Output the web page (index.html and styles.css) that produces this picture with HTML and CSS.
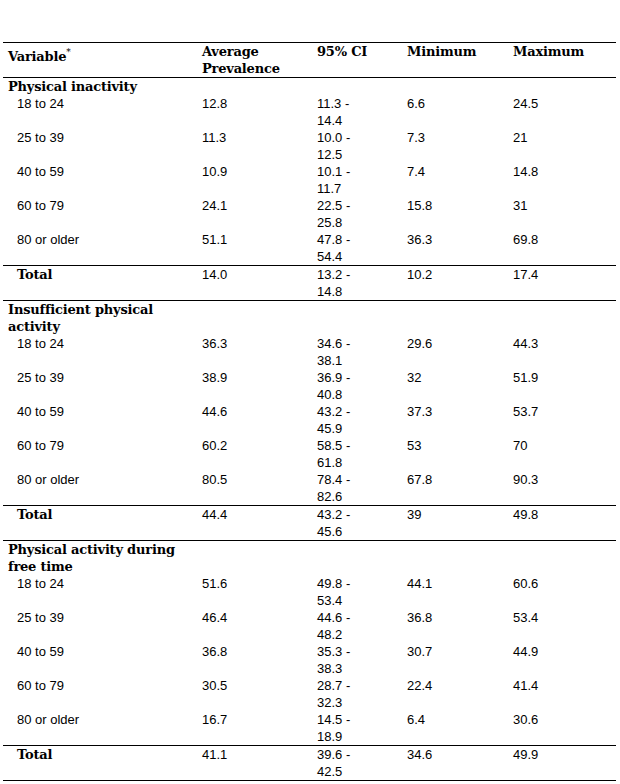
FILE: index.html
```html
<!DOCTYPE html>
<html>
<head>
<meta charset="utf-8">
<link rel="stylesheet" href="styles.css">
</head>
<body>
<table class="data">
  <colgroup>
    <col class="c1"><col class="c2"><col class="c3"><col class="c4"><col class="c5">
  </colgroup>
  <thead>
    <tr class="head">
      <th class="var">Variable<sup class="star">*</sup></th>
      <th>Average<br>Prevalence</th>
      <th>95% CI</th>
      <th>Minimum</th>
      <th>Maximum</th>
    </tr>
  </thead>
  <tbody>
    <tr class="group"><td colspan="5">Physical inactivity</td></tr>
    <tr><td class="sub">18 to 24</td><td>12.8</td><td>11.3 -<br>14.4</td><td>6.6</td><td>24.5</td></tr>
    <tr><td class="sub">25 to 39</td><td>11.3</td><td>10.0 -<br>12.5</td><td>7.3</td><td>21</td></tr>
    <tr><td class="sub">40 to 59</td><td>10.9</td><td>10.1 -<br>11.7</td><td>7.4</td><td>14.8</td></tr>
    <tr><td class="sub">60 to 79</td><td>24.1</td><td>22.5 -<br>25.8</td><td>15.8</td><td>31</td></tr>
    <tr><td class="sub">80 or older</td><td>51.1</td><td>47.8 -<br>54.4</td><td>36.3</td><td>69.8</td></tr>
    <tr class="total"><td class="sub">Total</td><td>14.0</td><td>13.2 -<br>14.8</td><td>10.2</td><td>17.4</td></tr>

    <tr class="group"><td colspan="5">Insufficient physical<br>activity</td></tr>
    <tr><td class="sub">18 to 24</td><td>36.3</td><td>34.6 -<br>38.1</td><td>29.6</td><td>44.3</td></tr>
    <tr><td class="sub">25 to 39</td><td>38.9</td><td>36.9 -<br>40.8</td><td>32</td><td>51.9</td></tr>
    <tr><td class="sub">40 to 59</td><td>44.6</td><td>43.2 -<br>45.9</td><td>37.3</td><td>53.7</td></tr>
    <tr><td class="sub">60 to 79</td><td>60.2</td><td>58.5 -<br>61.8</td><td>53</td><td>70</td></tr>
    <tr><td class="sub">80 or older</td><td>80.5</td><td>78.4 -<br>82.6</td><td>67.8</td><td>90.3</td></tr>
    <tr class="total"><td class="sub">Total</td><td>44.4</td><td>43.2 -<br>45.6</td><td>39</td><td>49.8</td></tr>

    <tr class="group"><td colspan="5">Physical activity during<br>free time</td></tr>
    <tr><td class="sub">18 to 24</td><td>51.6</td><td>49.8 -<br>53.4</td><td>44.1</td><td>60.6</td></tr>
    <tr><td class="sub">25 to 39</td><td>46.4</td><td>44.6 -<br>48.2</td><td>36.8</td><td>53.4</td></tr>
    <tr><td class="sub">40 to 59</td><td>36.8</td><td>35.3 -<br>38.3</td><td>30.7</td><td>44.9</td></tr>
    <tr><td class="sub">60 to 79</td><td>30.5</td><td>28.7 -<br>32.3</td><td>22.4</td><td>41.4</td></tr>
    <tr><td class="sub">80 or older</td><td>16.7</td><td>14.5 -<br>18.9</td><td>6.4</td><td>30.6</td></tr>
    <tr class="total"><td class="sub">Total</td><td>41.1</td><td>39.6 -<br>42.5</td><td>34.6</td><td>49.9</td></tr>
  </tbody>
</table>
</body>
</html>
```

FILE: styles.css
```css
html, body {
  margin: 0;
  background: #ffffff;
}

body {
  padding: 42px 4px 0 3px;
  font-family: "Liberation Sans", Arial, sans-serif;
  font-size: 13px;
  line-height: 17px;
  color: #000000;
}

.data {
  border-collapse: collapse;
  width: 613px;
  table-layout: fixed;
}

.c1 { width: 194px; }
.c2 { width: 115px; }
.c3 { width: 90px; }
.c4 { width: 106px; }
.c5 { width: 108px; }

.data th,
.data td {
  padding: 0 0 0 5px;
  vertical-align: top;
  text-align: left;
}

.data th,
.group td,
.total .sub {
  font-family: "DejaVu Serif", "Liberation Serif", serif;
  font-weight: bold;
  font-size: 13px;
  letter-spacing: -0.2px;
}

.head th {
  border-top: 1px solid #000;
  border-bottom: 1px solid #000;
}

.data th.var {
  padding-top: 5px;
}

.star {
  font-size: 9px;
  line-height: 0;
  vertical-align: 6px;
  font-weight: normal;
}

.data td.sub {
  padding-left: 14px;
}

.total td {
  border-top: 1px solid #000;
  border-bottom: 1px solid #000;
}
```
